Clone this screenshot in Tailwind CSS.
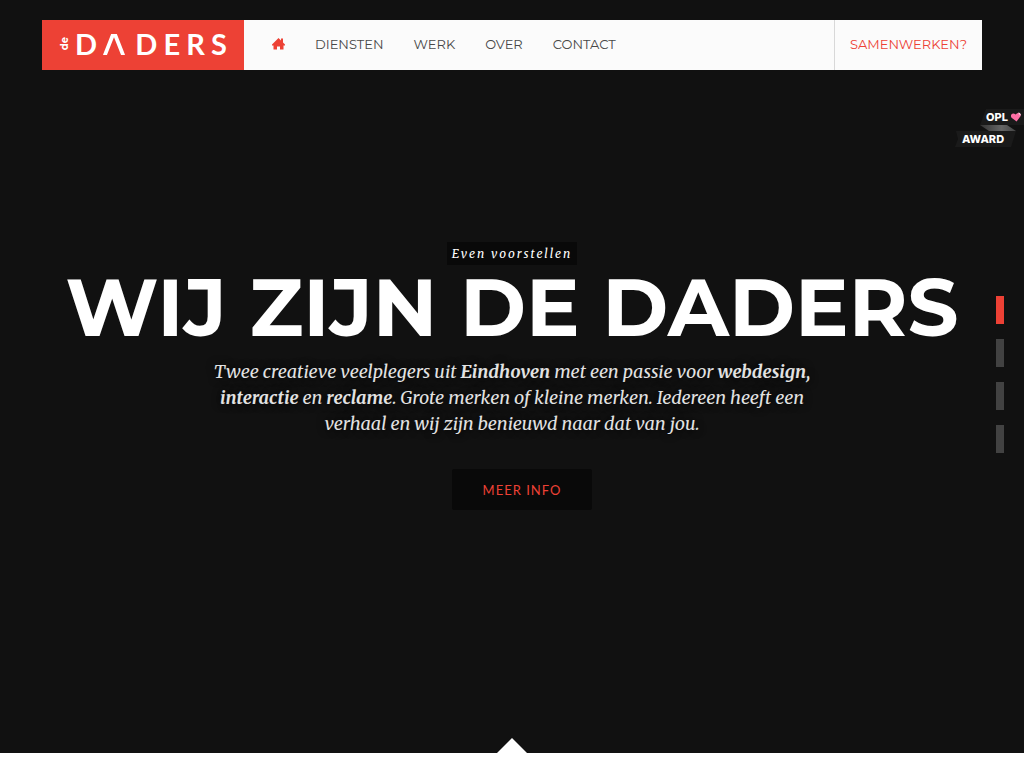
<!DOCTYPE html>
<html lang="nl">
<head>
<meta charset="utf-8">
<meta name="viewport" content="width=device-width, initial-scale=1">
<title>de Daders</title>
<script src="https://cdn.jsdelivr.net/npm/@tailwindcss/browser@4"></script>
</head>
<body class="bg-white font-['Montserrat','Inter',sans-serif]">
<div class="relative flex h-[calc(100vh-15px)] flex-col bg-[#111]">
  <header class="mx-[42px] mt-5 flex h-[50px] shrink-0 bg-[#fbfbfb] text-[13px]">
    <a href="#" aria-label="de Daders" class="flex w-[202px] shrink-0 items-center bg-[#ed4135] pb-[2px] pl-[17px] text-white">
      <span class="rotate-180 font-['Montserrat',sans-serif] text-[10px] leading-3 font-bold [writing-mode:vertical-rl]">de</span>
      <span class="ml-1 flex w-[152px] justify-between font-['Lato',sans-serif] text-[29px] leading-8 font-bold"><span>D</span><svg class="mt-[6px] mr-1 h-[21px] w-[22px]" viewBox="0 0 22 21" fill="none" stroke="currentColor" stroke-width="3.800" aria-hidden="true"><path d="M1.700 21.500 10.200 0h1.600L20.300 21.500" stroke-linejoin="bevel"/></svg><span>D</span><span>E</span><span>R</span><span>S</span></span>
    </a>
    <nav class="flex items-center gap-[30px] pl-7 text-[#484848]" aria-label="Hoofdmenu">
      <a href="#" aria-label="Home" class="text-[#ed4135]"><svg class="mb-[2px] h-3 w-[13px]" viewBox="0 0 13 12" fill="currentColor" aria-hidden="true"><path d="M6.500 0 9 2.500V.5h2v4l2 2V7.500h-1.500v4H8V8.500H5v3H1.500v-4H0v-1z"/></svg></a>
      <a href="#">DIENSTEN</a>
      <a href="#">WERK</a>
      <a href="#">OVER</a>
      <a href="#">CONTACT</a>
    </nav>
    <a href="#" class="ml-auto flex w-[148px] items-center justify-center border-l border-[#d8d8d8] text-[#ed4135]">SAMENWERKEN?</a>
  </header>

  <main class="flex flex-col items-center pt-[172px] text-center">
    <p class="bg-[#090909] px-[5px] font-['Merriweather','Liberation_Serif',serif] text-xs leading-[23px] tracking-[2px] text-white italic">Even voorstellen</p>
    <h1 class="text-[80px] leading-[86px] font-bold whitespace-nowrap text-white">WIJ ZIJN DE DADERS</h1>
    <p class="mt-2 font-['Merriweather','Liberation_Serif',serif] text-[18px] leading-[26px] text-[#e2e2e2] italic [text-shadow:0_0_8px_#000]">Twee creatieve veelplegers uit <b>Eindhoven</b> met een passie voor <b>webdesign,</b><br><b>interactie</b> en <b>reclame</b>. Grote merken of kleine merken. Iedereen heeft een<br>verhaal en wij zijn benieuwd naar dat van jou.</p>
    <a href="#" class="mt-8 ml-5 flex h-[41px] w-[140px] items-center justify-center rounded-xs bg-[#090909] pt-[2px] font-['Lato',sans-serif] text-[13px] tracking-[1px] text-[#ed4135]">MEER INFO</a>
  </main>

  <a href="#" aria-label="OPL Award" class="absolute top-[108px] right-0 h-10 w-[70px] text-[11px] font-extrabold text-white">
    <svg class="absolute inset-0 h-10 w-[70px]" viewBox="0 0 70 40" aria-hidden="true">
      <defs><linearGradient id="fold"><stop offset="0" stop-color="#333"/><stop offset=".6" stop-color="#666"/><stop offset="1" stop-color="#444"/></linearGradient></defs>
      <path d="M32 1h38v16H26z" fill="#1a1a1a"/><path d="M26 17h27l9 6H35z" fill="url(#fold)"/><path d="M2 23h60l-5 16H1l3-8z" fill="#1a1a1a"/>
      <path transform="rotate(-8 62 9)" d="M62 13.500 57.500 9C56 6.500 59 3.500 62 6.500 65 3.500 68 6.500 66.500 9z" fill="#ff6fa5"/><path d="m64 4.500 2 .5 1 2-1 .5z" fill="#ffd0e0"/>
    </svg>
    <span class="absolute top-0 left-8 font-['Inter',sans-serif] leading-[18px]">OPL</span>
    <span class="absolute top-[22px] left-2 font-['Inter',sans-serif] leading-[18px]">AWARD</span>
  </a>

  <nav class="absolute top-[296px] right-5 flex flex-col gap-[15px]" aria-label="Secties">
    <a href="#" aria-label="Sectie 1" class="h-7 w-2 bg-[#ed4135]"></a>
    <a href="#" aria-label="Sectie 2" class="h-7 w-2 bg-[#424242]"></a>
    <a href="#" aria-label="Sectie 3" class="h-7 w-2 bg-[#424242]"></a>
    <a href="#" aria-label="Sectie 4" class="h-7 w-2 bg-[#424242]"></a>
  </nav>

  <svg class="mx-auto mt-auto h-[15px] w-[30px] shrink-0" viewBox="0 0 30 15" aria-hidden="true"><path d="M0 15 15 0l15 15z" fill="#fff"/></svg>
</div>
</body>
</html>
